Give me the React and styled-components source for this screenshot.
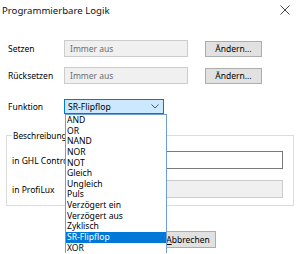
import * as React from "react"
import styled, { createGlobalStyle } from "styled-components"

const GlobalStyle = createGlobalStyle`
  html, body {
    margin: 0;
    padding: 0;
    background: #fff;
  }
  body {
    font-family: "Noto Sans", "Open Sans", sans-serif;
    color: #000;
  }
`

const Dialog = styled.div`
  position: relative;
  width: 300px;
  height: 254px;
  overflow: hidden;
  background: #fff;
`

const TitleBar = styled.div`
  height: 20px;
  display: flex;
  align-items: center;
  justify-content: space-between;
  padding: 0 10px 0 2px;
`

const Title = styled.span`
  font-size: 9.6px;
  color: #111;
`

const Body = styled.div`
  padding: 20px 0 0 8px;
`

const Row = styled.div`
  display: flex;
  align-items: center;
  height: ${(p) => p.h || 17}px;
  margin-bottom: ${(p) => p.mb || 0}px;
`

const Label = styled.span`
  width: ${(p) => p.w || 56}px;
  flex: none;
  font-size: 8.5px;
  white-space: nowrap;
`

const Field = styled.div`
  box-sizing: border-box;
  flex: none;
  width: ${(p) => p.w}px;
  height: ${(p) => p.h || 17}px;
  border: 1px solid ${(p) => (p.active ? "#7a7a7a" : "#cccccc")};
  background: ${(p) => (p.active ? "#fff" : "#f0f0f0")};
  color: #6d6d6d;
  font-size: 8.5px;
  display: flex;
  align-items: center;
  padding-left: 5px;
`

const Button = styled.div`
  box-sizing: border-box;
  flex: none;
  width: ${(p) => p.w || 57}px;
  height: ${(p) => p.h || 16}px;
  margin-left: ${(p) => p.ml || 0}px;
  border: 1px solid #adadad;
  background: #e1e1e1;
  font-size: 8.5px;
  display: flex;
  align-items: center;
  justify-content: center;
  u {
    text-decoration: underline;
  }
`

const Select = styled.div`
  box-sizing: border-box;
  width: 100px;
  height: 15px;
  border: 1px solid #0078d7;
  background: #cce8ff;
  font-size: 8.6px;
  display: flex;
  align-items: center;
  justify-content: space-between;
  padding: 0 4px 0 3px;
`

const Group = styled.fieldset`
  box-sizing: border-box;
  width: 288px;
  height: 76px;
  margin: 16px 0 0 -2px;
  padding: 0 9px 0 5px;
  border: 1px solid #dcdcdc;
  legend {
    font-size: 8.3px;
    padding: 0 1px;
    margin-left: 0;
  }
`

const GroupRow = styled.div`
  display: flex;
  align-items: center;
  margin-top: ${(p) => p.mt}px;
`

const Footer = styled.div`
  display: flex;
  margin-top: 25px;
  padding-left: 90px;
`

const List = styled.ul`
  position: absolute;
  left: 65px;
  top: 114px;
  width: 102px;
  box-sizing: border-box;
  margin: 0;
  padding: 0;
  list-style: none;
  background: #fff;
  border: 1px solid #6e9fd0;
  border-bottom: none;
`

const Item = styled.li`
  height: 10.65px;
  line-height: 10.65px;
  font-size: 8.6px;
  padding-left: 1px;
  background: ${(p) => (p.selected ? "#0078d7" : "transparent")};
  color: ${(p) => (p.selected ? "#fff" : "#000")};
  white-space: nowrap;
`

const options = [
  "AND",
  "OR",
  "NAND",
  "NOR",
  "NOT",
  "Gleich",
  "Ungleich",
  "Puls",
  "Verzögert ein",
  "Verzögert aus",
  "Zyklisch",
  "SR-Flipflop",
  "XOR",
]

const Chevron = () => (
  <svg width="8" height="5" viewBox="0 0 8 5">
    <path d="M0.5 0.5 L4 4 L7.5 0.5" fill="none" stroke="#444" strokeWidth="0.9" />
  </svg>
)

const Close = () => (
  <svg width="10" height="10" viewBox="0 0 10 10">
    <path d="M0.5 0.5 L9.5 9.5 M9.5 0.5 L0.5 9.5" stroke="#333" strokeWidth="0.9" />
  </svg>
)

export default function App() {
  return (
    <Dialog>
      <GlobalStyle />
      <TitleBar>
        <Title>Programmierbare Logik</Title>
        <Close />
      </TitleBar>
      <Body>
        <Row mb={10}>
          <Label>Setzen</Label>
          <Field w={124}>Immer aus</Field>
          <Button ml={17}>Ändern...</Button>
        </Row>
        <Row mb={15}>
          <Label>Rücksetzen</Label>
          <Field w={124}>Immer aus</Field>
          <Button ml={17}>Ändern...</Button>
        </Row>
        <Row h={15}>
          <Label>Funktion</Label>
          <Select>
            <span>SR-Flipflop</span>
            <Chevron />
          </Select>
        </Row>
        <Group>
          <legend>Beschreibung</legend>
          <GroupRow mt={10}>
            <Label w={54}>in GHL Control</Label>
            <Field w={217} h={18} active />
          </GroupRow>
          <GroupRow mt={11}>
            <Label w={54}>in ProfiLux</Label>
            <Field w={217} h={18} />
          </GroupRow>
        </Group>
        <Footer>
          <Button w={56} h={17}>OK</Button>
          <Button w={56} h={17} ml={6}>
            <span><u>A</u>bbrechen</span>
          </Button>
        </Footer>
      </Body>
      <List>
        {options.map((o) => (
          <Item key={o} selected={o === "SR-Flipflop"}>
            {o}
          </Item>
        ))}
      </List>
    </Dialog>
  )
}
